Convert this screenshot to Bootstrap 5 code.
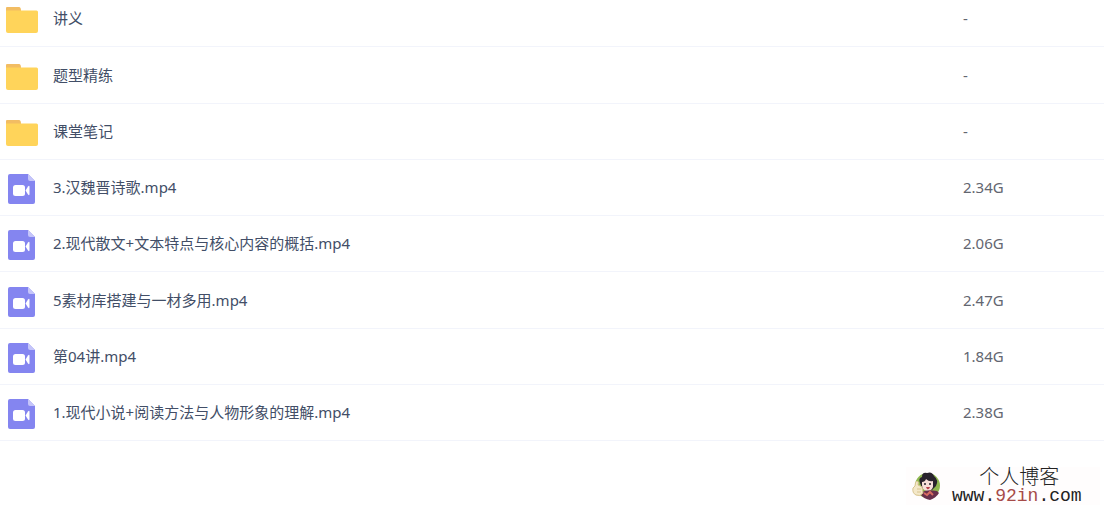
<!DOCTYPE html>
<html lang="zh-CN">
<head>
<meta charset="utf-8">
<meta name="viewport" content="width=device-width, initial-scale=1">
<title>文件列表</title>
<link rel="stylesheet" href="https://cdn.jsdelivr.net/npm/bootstrap@5.3.0/dist/css/bootstrap.min.css">
<style>
body { font-family: "Noto Sans", "Noto Sans CJK SC", sans-serif; font-size: 15px; line-height: 22px; background: #fff; }
.file-area { overflow: hidden; }
/* the list is scrolled slightly, so its first row is cut at the top */
.file-table { margin-top: -10px; table-layout: fixed; }
.file-table > tbody > tr { height: 56px; border-bottom: 1px solid #f2f4fb; }
.file-table > tbody > tr:nth-child(4n+2) { height: 57px; }
.file-table > tbody > tr > td { border: 0; padding: 0; color: #636670; vertical-align: middle; }
.size-col { width: 141px; }
.file-link { color: #424e67; gap: 15px; padding-left: 6px; }
.file-link svg { flex: none; position: relative; top: 2px; }
.site-mark { width: 194px; margin: 26px 4px 0 auto; padding-left: 6px; background: #fffdfd; gap: 12px; }
.site-name { font-family: "Liberation Serif", "Noto Sans CJK SC", serif; font-size: 20px; line-height: 20px; color: #222; font-weight: 300; padding-left: 5px; }
.site-url { font-family: "Liberation Mono", monospace; font-size: 18px; line-height: 18px; color: #222; }
.site-url span { color: #a64b48; }
</style>
</head>
<body>
<svg class="d-none" aria-hidden="true">
  <symbol id="folder" viewBox="0 0 32 28">
    <path d="M0 8V2Q0 1 1 1H13Q15 1 15 5V8Z" fill="#f2bd63"/>
    <path d="M0 4.5H30.5Q32 4.5 32 6V25Q32 27 30 27H2Q0 27 0 25Z" fill="#ffd45a"/>
  </symbol>
  <symbol id="video" viewBox="0 0 32 30">
    <path d="M4 0H22L29 7V28Q29 30 27 30H4Q2 30 2 28V2Q2 0 4 0Z" fill="#8485f0"/>
    <path d="M22 0L29 7H24Q22 7 22 5Z" fill="#c5c5fa"/>
    <rect x="7" y="11" width="12" height="11" rx="2.5" fill="#fff"/>
    <path d="M19.5 16.5L22 12.5Q23.5 11 23.5 13V20Q23.5 22 22 20.5Z" fill="#fff"/>
  </symbol>
</svg>
<main class="file-area">
<table class="table file-table mb-0">
  <colgroup><col><col class="size-col"></colgroup>
  <tbody>
    <tr><td><a href="#" class="file-link d-flex align-items-center text-decoration-none"><svg width="32" height="28"><use href="#folder"/></svg>讲义</a></td><td>-</td></tr>
    <tr><td><a href="#" class="file-link d-flex align-items-center text-decoration-none"><svg width="32" height="28"><use href="#folder"/></svg>题型精练</a></td><td>-</td></tr>
    <tr><td><a href="#" class="file-link d-flex align-items-center text-decoration-none"><svg width="32" height="28"><use href="#folder"/></svg>课堂笔记</a></td><td>-</td></tr>
    <tr><td><a href="#" class="file-link d-flex align-items-center text-decoration-none"><svg width="32" height="30"><use href="#video"/></svg>3.汉魏晋诗歌.mp4</a></td><td>2.34G</td></tr>
    <tr><td><a href="#" class="file-link d-flex align-items-center text-decoration-none"><svg width="32" height="30"><use href="#video"/></svg>2.现代散文+文本特点与核心内容的概括.mp4</a></td><td>2.06G</td></tr>
    <tr><td><a href="#" class="file-link d-flex align-items-center text-decoration-none"><svg width="32" height="30"><use href="#video"/></svg>5素材库搭建与一材多用.mp4</a></td><td>2.47G</td></tr>
    <tr><td><a href="#" class="file-link d-flex align-items-center text-decoration-none"><svg width="32" height="30"><use href="#video"/></svg>第04讲.mp4</a></td><td>1.84G</td></tr>
    <tr><td><a href="#" class="file-link d-flex align-items-center text-decoration-none"><svg width="32" height="30"><use href="#video"/></svg>1.现代小说+阅读方法与人物形象的理解.mp4</a></td><td>2.38G</td></tr>
  </tbody>
</table>
</main>
<footer class="site-mark d-flex align-items-center">
  <svg width="28" height="30" viewBox="0 0 28 30" aria-hidden="true">
    <circle cx="15.500" cy="14.500" r="12.500" fill="#8fb84f"/>
    <path d="M8 12Q6 7 10 6Q10 1 15 2Q20 0 22 5Q27 9 24 15L20 19L10 17Z" fill="#29232d"/>
    <path d="M10 11Q13 11 14 8Q17 11 21 10V16Q19 21 15 20Q10 19 10 14Z" fill="#f7dfd9"/>
    <path d="M12 13H14M17 13H19" stroke="#29232d" stroke-width="1.500"/>
    <path d="M14 16H18Q17 19 15 18Z" fill="#b8434e"/>
    <path d="M10 21Q15 18 25 20L27 22Q24 27 18 29Q12 28 9 24Z" fill="#69304b"/>
    <path d="M12 22L15 24L18 21L21 24" fill="none" stroke="#d86b61" stroke-width="2"/>
    <path d="M3 15Q3 11 5 10Q7 10 6 14L10 16L11 22Q8 26 4 24Q0 22 1 17Z" fill="#f4e8c9" stroke="#d8c48f"/>
    <path d="M5 18H9M5 21H9" stroke="#d8c48f"/>
  </svg>
  <div class="text-center">
    <div class="site-name">个人博客</div>
    <div class="site-url">www.<span>92in</span>.com</div>
  </div>
</footer>
<script src="https://cdn.jsdelivr.net/npm/bootstrap@5.3.0/dist/js/bootstrap.bundle.min.js"></script>
</body>
</html>
